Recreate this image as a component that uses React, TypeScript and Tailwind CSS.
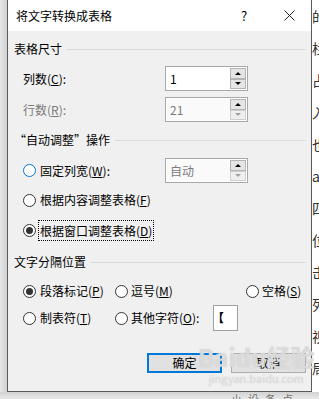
import React from "react";

function Radio({ checked = false, blue = false }: { checked?: boolean; blue?: boolean }) {
  return (
    <span
      className={`w-[13px] h-[13px] shrink-0 rounded-full border bg-white flex items-center justify-center ${
        blue ? "border-[#0078d7]" : "border-[#333333]"
      }`}
    >
      {checked && <span className="w-[7px] h-[7px] rounded-full bg-[#333333]" />}
    </span>
  );
}

function Up({ gray = false }: { gray?: boolean }) {
  return (
    <span
      className={`w-0 h-0 border-x-[3px] border-x-transparent border-b-[3px] ${
        gray ? "border-b-[#a0a0a0]" : "border-b-black"
      }`}
    />
  );
}
function Down({ gray = false }: { gray?: boolean }) {
  return (
    <span
      className={`w-0 h-0 border-x-[3px] border-x-transparent border-t-[3px] ${
        gray ? "border-t-[#a0a0a0]" : "border-t-black"
      }`}
    />
  );
}

function SpinBox({ value, disabled = false }: { value: string; disabled?: boolean }) {
  return (
    <div className="w-[83px] h-[25px] border border-[#a8a8a8] bg-white flex p-px">
      <div
        className={`flex-1 flex items-center pl-[3px] ${
          disabled ? "text-[#7a7a7a] bg-[#fafafa]" : "text-black"
        }`}
      >
        {value}
      </div>
      <div className="w-[16px] flex flex-col">
        <div className="h-[11px] border border-[#b4b4b4] bg-[#e5e5e5] flex items-center justify-center">
          <Up />
        </div>
        <div
          className={`h-[11px] border border-[#b4b4b4] flex items-center justify-center ${
            disabled ? "bg-[#efefef] border-[#cfcfcf]" : "bg-[#e5e5e5]"
          }`}
        >
          <Down gray={disabled} />
        </div>
      </div>
    </div>
  );
}

function Header({ children }: { children: React.ReactNode }) {
  return (
    <div className="h-[20px] flex items-center pl-[6px] pr-[5px]">
      <span className="leading-none">{children}</span>
      <span className="flex-1 h-px bg-[#dadada] ml-[5px]" />
    </div>
  );
}

function Dialog() {
  return (
    <div className="w-[305px] h-[392px] shrink-0 border-x border-b border-[#5a5a5a] bg-[#f0f0f0] flex flex-col">
      <div className="h-[31px] bg-white flex items-center pl-[8px] pr-[16px]">
        <span className="flex-1 text-[12px] leading-none">将文字转换成表格</span>
        <span className="w-[7px] text-[13px] leading-none mr-[36px]">?</span>
        <svg width="11" height="11" viewBox="0 0 11 11">
          <path d="M0.5 0.5 L10.5 10.5 M10.5 0.5 L0.5 10.5" stroke="#222" strokeWidth="1" />
        </svg>
      </div>

      <div className="mt-[8px]">
        <Header>表格尺寸</Header>
      </div>

      <div className="mt-[7px] h-[25px] flex items-center pl-[15px]">
        <span className="w-[142px] leading-none">
          列数(<u>C</u>):
        </span>
        <SpinBox value="1" />
      </div>

      <div className="mt-[6px] h-[25px] flex items-center pl-[15px]">
        <span className="w-[142px] leading-none text-[#7a7a7a]">
          行数(<u>R</u>):
        </span>
        <SpinBox value="21" disabled />
      </div>

      <div className="mt-[8px]">
        <Header>“自动调整”操作</Header>
      </div>

      <div className="mt-[8px] h-[25px] flex items-center pl-[15px]">
        <span className="w-[142px] flex items-center gap-[4px]">
          <Radio blue />
          <span className="leading-none">
            固定列宽(<u>W</u>):
          </span>
        </span>
        <SpinBox value="自动" disabled />
      </div>

      <div className="mt-[7px] h-[20px] flex items-center pl-[15px] gap-[4px]">
        <Radio />
        <span className="leading-none">
          根据内容调整表格(<u>F</u>)
        </span>
      </div>

      <div className="mt-[10px] h-[21px] flex items-center pl-[15px] gap-[2px]">
        <Radio checked />
        <span className="h-[21px] flex items-center px-px border border-dotted border-black leading-none">
          根据窗口调整表格(<u>D</u>)
        </span>
      </div>

      <div className="mt-[11px]">
        <Header>文字分隔位置</Header>
      </div>

      <div className="mt-[9px] h-[20px] flex items-center pl-[15px]">
        <span className="w-[92px] flex items-center gap-[4px]">
          <Radio checked />
          <span className="leading-none">
            段落标记(<u>P</u>)
          </span>
        </span>
        <span className="w-[131px] flex items-center gap-[3px]">
          <Radio />
          <span className="leading-none">
            逗号(<u>M</u>)
          </span>
        </span>
        <span className="flex items-center gap-[3px]">
          <Radio />
          <span className="leading-none">
            空格(<u>S</u>)
          </span>
        </span>
      </div>

      <div className="mt-[4px] h-[26px] flex items-center pl-[15px]">
        <span className="w-[92px] flex items-center gap-[4px]">
          <Radio />
          <span className="leading-none">
            制表符(<u>T</u>)
          </span>
        </span>
        <span className="w-[98px] flex items-center gap-[3px]">
          <Radio />
          <span className="leading-none">
            其他字符(<u>O</u>):
          </span>
        </span>
        <span className="w-[25px] h-[26px] border border-[#a0a0a0] bg-white flex items-center overflow-hidden">
          <span className="font-bold leading-none -ml-[2px]">【</span>
        </span>
      </div>

      <div className="mt-[22px] flex justify-end pr-[5px] gap-[9px]">
        <button className="w-[75px] h-[20px] border-2 border-[#0078d7] bg-[#e1e1e1] flex items-center justify-center leading-none">
          确定
        </button>
        <button className="w-[75px] h-[20px] border border-[#adadad] bg-[#e1e1e1] flex items-center justify-center leading-none">
          取消
        </button>
      </div>
    </div>
  );
}

function RightText() {
  const chars = ["的", "栏", "占", "入", "也", "ar", "四", "位", "击", "列", "视", "局"];
  return (
    <div className="flex-1 bg-white overflow-hidden">
      <div className="flex flex-col text-[14px] leading-[32px] text-[#333] whitespace-nowrap">
        {chars.map((c, i) => (
          <span key={i}>{c}</span>
        ))}
      </div>
    </div>
  );
}

export default function App() {
  return (
    <div className="w-[319px] h-[399px] overflow-hidden relative bg-white font-['Noto_Sans_CJK_SC','Liberation_Sans',sans-serif] text-[12px] text-black">
      <div className="flex h-[392px]">
        <div className="w-[7px] shrink-0 bg-gradient-to-r from-[#e6e6e6] to-[#d2d2d2]" />
        <Dialog />
        <RightText />
      </div>
      <div className="h-[7px] bg-gradient-to-b from-[#d2d2d2] to-[#e8e8e8] flex justify-end pr-[20px] overflow-hidden">
        <span className="text-[11px] leading-[14px] text-[#777] tracking-[6px]">小设备卢</span>
      </div>
      <div className="absolute left-[198px] top-[342px] flex flex-col items-center pointer-events-none">
        <span className="text-[24px] font-bold leading-[30px] text-white/50 [text-shadow:0_0_1px_#b4b4b4]">
          Baidu经验
        </span>
        <span className="text-[11px] leading-[13px] text-white/50 [text-shadow:0_0_1px_#b4b4b4]">
          jingyan.baidu.com
        </span>
      </div>
    </div>
  );
}
